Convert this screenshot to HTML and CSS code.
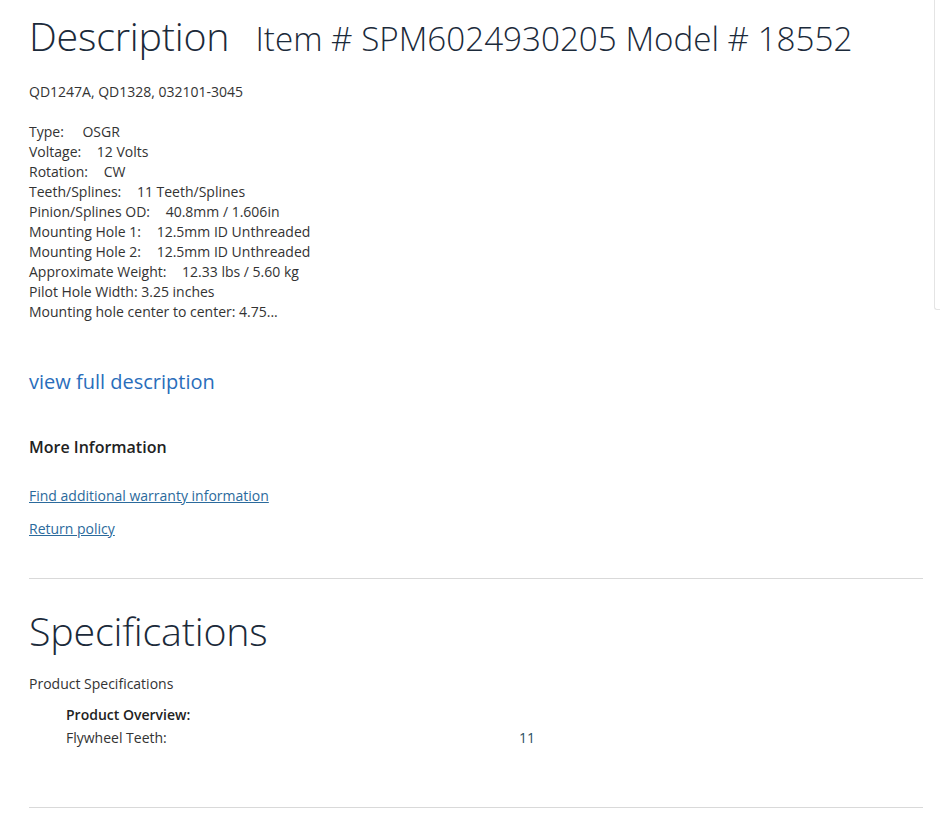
FILE: index.html
```html
<!DOCTYPE html>
<html>
<head>
<meta charset="utf-8">
<link rel="stylesheet" href="styles.css">
</head>
<body>
<div class="edge"></div>
<main class="page">
  <section class="desc">
    <h1 class="title">Description <span class="item">Item # SPM6024930205 Model # 18552</span></h1>
    <p class="codes">QD1247A, QD1328, 032101-3045</p>
    <ul class="specs">
      <li>Type: <span class="v v-wide">OSGR</span></li>
      <li>Voltage: <span class="v">12 Volts</span></li>
      <li>Rotation: <span class="v">CW</span></li>
      <li>Teeth/Splines: <span class="v">11 Teeth/Splines</span></li>
      <li>Pinion/Splines OD: <span class="v">40.8mm / 1.606in</span></li>
      <li>Mounting Hole 1: <span class="v">12.5mm ID Unthreaded</span></li>
      <li>Mounting Hole 2: <span class="v">12.5mm ID Unthreaded</span></li>
      <li>Approximate Weight: <span class="v">12.33 lbs / 5.60 kg</span></li>
      <li>Pilot Hole Width: 3.25 inches</li>
      <li>Mounting hole center to center: 4.75...</li>
    </ul>
    <a class="full" href="#">view full description</a>
    <h3 class="more">More Information</h3>
    <div class="links">
      <a href="#">Find additional warranty information</a>
      <a href="#">Return policy</a>
    </div>
  </section>
  <hr class="rule">
  <section class="spec">
    <h2 class="title">Specifications</h2>
    <p class="sub">Product Specifications</p>
    <div class="table">
      <div class="row head">Product Overview:</div>
      <div class="row"><span class="k">Flywheel Teeth:</span><span class="val">11</span></div>
    </div>
  </section>
  <hr class="rule">
</main>
</body>
</html>
```
FILE: styles.css
```css
* { box-sizing: border-box; }
html, body { margin: 0; padding: 0; background: #fff; }
body {
  font-family: "Open Sans", "Liberation Sans", sans-serif;
  font-size: 14px;
  line-height: 20px;
  color: #333;
}
.edge {
  position: absolute;
  top: -4px;
  right: 2px;
  width: 6px;
  height: 314px;
  border: 1px solid #e4e4e4;
  border-right: none;
  border-radius: 0 0 0 3px;
}
.page {
  padding: 0 20px 0 29px;
}
.title {
  margin: 0;
  font-weight: 300;
  font-size: 39.4px;
  line-height: 56px;
  color: #1b2a3a;
  letter-spacing: -0.2px;
}
.desc .title { padding-top: 8px; }
.item {
  font-size: 33.2px;
  margin-left: 16px;
  letter-spacing: 0;
}
.codes {
  margin: 15px 0 0;
}
.specs {
  list-style: none;
  margin: 20px 0 0;
  padding: 0;
}
.v { margin-left: 12px; }
.v-wide { margin-left: 15px; }
.full {
  display: block;
  margin-top: 46px;
  font-size: 20px;
  line-height: 28px;
  color: #2a6ebb;
  text-decoration: none;
}
.more {
  margin: 39px 0 0;
  font-size: 16px;
  font-weight: 600;
  line-height: 24px;
  color: #222;
}
.links {
  display: flex;
  flex-direction: column;
  align-items: flex-start;
  gap: 13px;
  margin-top: 27px;
}
.links a {
  color: #2b6a9c;
  text-decoration: underline;
}
.rule {
  margin: 39px 0 0;
  border: none;
  border-top: 1px solid #d9d9d9;
  width: 894px;
}
.spec .title { padding-top: 24px; }
.sub {
  margin: 15px 0 0;
}
.table {
  margin-top: 9px;
  padding-left: 37px;
}
.row {
  display: flex;
  line-height: 23px;
}
.row.head {
  font-weight: 600;
  color: #222;
}
.k { width: 453px; }
.val { color: #2a4f5f; }
.spec + .rule { margin-top: 58px; }
```
